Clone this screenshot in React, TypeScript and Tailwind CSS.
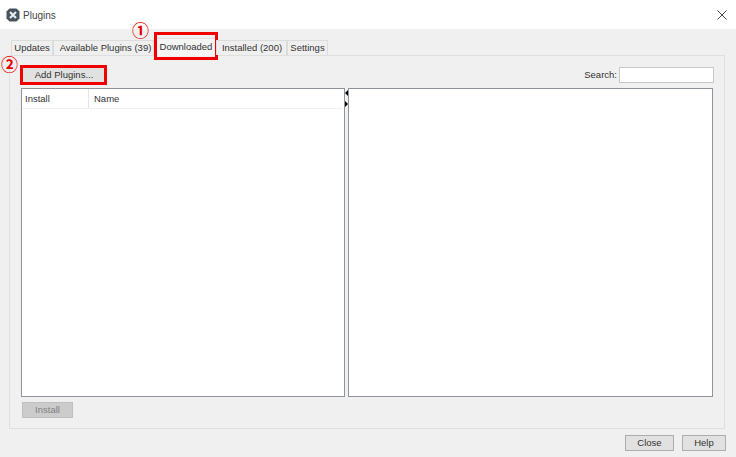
import React from "react";

const font = "font-['Liberation_Sans','Noto_Sans',sans-serif]";

const tabs = [
	{label: "Updates", width: "w-[42px]"},
	{label: "Available Plugins (39)", width: "w-[101px] pl-[4px]"},
	{label: "Downloaded", width: "w-[62px] pl-[2px]", active: true},
	{label: "Installed (200)", width: "w-[71px] pl-[1px]"},
	{label: "Settings", width: "w-[41px]"},
];

const AppLogo = () => (
	<svg width="14" height="14" viewBox="0 0 14 14" className="shrink-0">
		<path d="M3.5.5h7l3 3v7l-3 3h-7l-3-3v-7z" fill="#46525c" />
		<path d="M4 4l6 6M10 4l-6 6" stroke="#e8ebee" strokeWidth="2.2" />
	</svg>
);

const Marker = ({digit, className}: {digit: string; className: string}) => (
	<span className={`absolute font-['Noto_Sans_CJK_JP',sans-serif] font-bold text-[17px] leading-[17px] text-[#e60000] ${className}`}>
		{digit}
	</span>
);

const App: React.FC = () => {
	return (
		<div className={`w-[736px] h-[457px] flex flex-col bg-[#f0f0f0] text-[9.5px] text-[#333] overflow-hidden ${font}`}>
			{/* title bar */}
			<div className="h-[29px] bg-white flex items-center pl-[6px] pr-[9px] shrink-0">
				<AppLogo />
				<span className="ml-[3px] mt-[2px] text-[10px] text-[#444]">Plugins</span>
				<svg width="10" height="10" viewBox="0 0 10 10" className="ml-auto">
					<path d="M.5.5l9 9M9.5.5l-9 9" stroke="#333" strokeWidth="0.9" fill="none" />
				</svg>
			</div>

			<div className="flex-1 flex flex-col px-[9px] pt-[11px]">
				{/* tabs */}
				<div className="flex h-[15px] pl-[2px] relative z-10 shrink-0">
					{tabs.map((tab) => (
						<div
							key={tab.label}
							className={`${tab.width} relative flex items-center justify-center border border-b-0 whitespace-nowrap ${
								tab.active
									? "bg-[#f5f5f5] border-[#e0e0e0] -mt-[2px] h-[18px]"
									: "bg-[#efefef] border-[#dcdcdc]"
							}`}
						>
							{tab.label}
							{tab.active && (
								<div className="absolute -left-[1px] -top-[7px] w-[64px] h-[28px] border-[3px] border-[#f00000]" />
							)}
							{tab.active && <Marker digit="①" className="left-[-23px] -top-[18px]" />}
						</div>
					))}
				</div>

				{/* tab panel */}
				<div className="h-[374px] w-[716px] border border-[#dfdfdf] bg-[#f0f0f0] px-[11px] pt-[10px] flex flex-col shrink-0">
					<div className="flex items-center h-[18px] shrink-0">
						<div className="relative">
							<button className="w-[84px] h-[16px] ml-px bg-[#e1e1e1] border border-[#adadad] flex items-center justify-center text-[#333] text-[9.5px]">
								Add Plugins...
							</button>
							<div className="absolute -left-[1px] -top-[2px] w-[87px] h-[20px] border-[3px] border-[#f00000]" />
							<Marker digit="②" className="-left-[20px] -top-[12px]" />
						</div>
						<span className="ml-auto mr-[2px]">Search:</span>
						<div className="w-[95px] h-[16px] mr-[-1px] bg-white border border-[#c8c8c8]" />
					</div>

					<div className="flex mt-[4px] h-[309px] shrink-0">
						{/* plugin table */}
						<div className="w-[325px] bg-white border border-[#8f939b]">
							<div className="flex h-[20px] border-b border-[#f0f0f0] mr-[2px]">
								<div className="w-[67px] pl-[3px] pt-[2px] border-r border-[#e5e5e5] flex items-center">Install</div>
								<div className="pl-[5px] pt-[2px] flex items-center">Name</div>
							</div>
						</div>
						{/* splitter */}
						<div className="w-[3px] flex flex-col items-center pt-[2px] gap-[5px]">
							<div className="w-0 h-0 border-y-[3px] border-y-transparent border-r-[3px] border-r-black" />
							<div className="w-0 h-0 border-y-[3px] border-y-transparent border-l-[3px] border-l-black" />
						</div>
						{/* detail pane */}
						<div className="w-[367px] bg-white border border-[#8f939b]" />
					</div>

					<button className="w-[51px] h-[16px] mt-[5px] ml-px bg-[#cccccc] border border-[#bfbfbf] text-[#808080] flex items-center justify-center text-[9.5px]">
						Install
					</button>
				</div>

				{/* footer */}
				<div className="flex justify-end gap-[8px] mt-[6px] pr-px">
					<button className="w-[49px] h-[16px] bg-[#e1e1e1] border border-[#adadad] flex items-center justify-center text-[#333] text-[9.5px]">
						Close
					</button>
					<button className="w-[44px] h-[16px] bg-[#e1e1e1] border border-[#adadad] flex items-center justify-center text-[#333] text-[9.5px]">
						Help
					</button>
				</div>
			</div>
		</div>
	);
};

export default App;
